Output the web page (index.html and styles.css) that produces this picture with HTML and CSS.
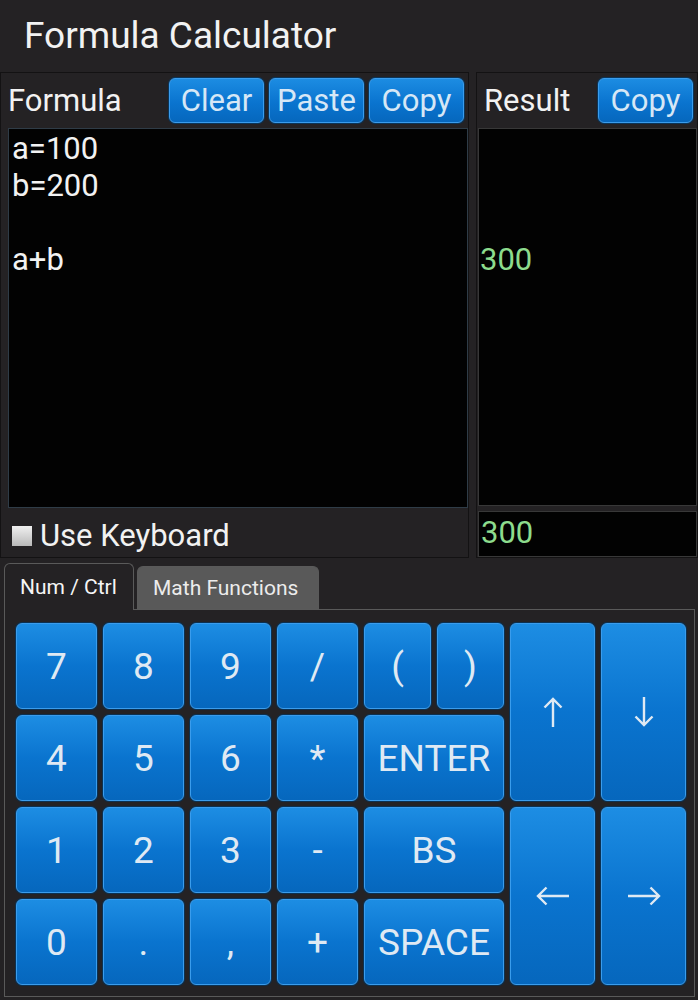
FILE: index.html
```html
<!DOCTYPE html>
<html lang="en">
<head>
  <meta charset="utf-8">
  <title>Formula Calculator</title>
  <link rel="stylesheet" href="styles.css">
</head>
<body>
  <div class="app-title">Formula Calculator</div>

  <div class="work">
    <div class="pane formula-pane">
      <div class="pane-head">
        <span class="pane-label">Formula</span>
        <div class="head-btns">
          <button class="btn">Clear</button>
          <button class="btn">Paste</button>
          <button class="btn">Copy</button>
        </div>
      </div>
      <div class="editor">
        <div class="line">a=100</div>
        <div class="line">b=200</div>
        <div class="line"></div>
        <div class="line">a+b</div>
      </div>
      <label class="kbd-toggle"><span class="check"></span>Use Keyboard</label>
    </div>

    <div class="pane result-pane">
      <div class="pane-head">
        <span class="pane-label">Result</span>
        <div class="head-btns">
          <button class="btn">Copy</button>
        </div>
      </div>
      <div class="results">
        <div class="line"></div>
        <div class="line"></div>
        <div class="line"></div>
        <div class="line">300</div>
      </div>
      <div class="result-total">300</div>
    </div>
  </div>

  <div class="tabs">
    <div class="tab active">Num / Ctrl</div>
    <div class="tab">Math Functions</div>
  </div>

  <div class="tab-panel">
    <div class="keypad">
      <button class="key">7</button>
      <button class="key">8</button>
      <button class="key">9</button>
      <button class="key">/</button>
      <button class="key">(</button>
      <button class="key">)</button>
      <button class="key tall">
        <svg width="32" height="32" viewBox="0 0 32 32"><path d="M16 3V31M7.5 11.5L16 3L24.5 11.5"/></svg>
      </button>
      <button class="key tall">
        <svg width="32" height="32" viewBox="0 0 32 32"><path d="M16 1V29M7.5 20.5L16 29L24.5 20.5"/></svg>
      </button>

      <button class="key">4</button>
      <button class="key">5</button>
      <button class="key">6</button>
      <button class="key">*</button>
      <button class="key wide">ENTER</button>

      <button class="key">1</button>
      <button class="key">2</button>
      <button class="key">3</button>
      <button class="key">-</button>
      <button class="key wide">BS</button>
      <button class="key tall">
        <svg width="34" height="32" viewBox="0 0 34 32"><path d="M2 16H33M10.5 7.5L2 16L10.5 24.5"/></svg>
      </button>
      <button class="key tall">
        <svg width="34" height="32" viewBox="0 0 34 32"><path d="M1 16H32M23.5 7.5L32 16L23.5 24.5"/></svg>
      </button>

      <button class="key">0</button>
      <button class="key">.</button>
      <button class="key">,</button>
      <button class="key">+</button>
      <button class="key wide">SPACE</button>
    </div>
  </div>
</body>
</html>
```

FILE: styles.css
```css
body {
  margin: 0;
  background-color: #242224;
  color: #f2f2f2;
  font-family: Roboto, "Noto Sans", sans-serif;
}

button {
  font-family: inherit;
  padding: 0;
  cursor: pointer;
}

.app-title {
  height: 72px;
  padding-left: 24px;
  font-size: 37px;
  line-height: 72px;
}

/* formula / result panes */

.work {
  display: flex;
  gap: 7px;
  height: 486px;
}

.pane {
  box-sizing: border-box;
  display: flex;
  flex-direction: column;
  border: 1px solid #131213;
}

.formula-pane { width: 469px; }

.result-pane { width: 222px; }

.pane-head {
  display: flex;
  justify-content: space-between;
  height: 55px;
  padding: 5px 4px 0 7px;
  box-sizing: border-box;
}

.pane-label {
  font-size: 31px;
  line-height: 45px;
}

.head-btns {
  display: flex;
  gap: 5px;
}

.btn {
  width: 95px;
  height: 45px;
  border: 1px solid #3a9cec;
  border-radius: 6px;
  box-shadow: 0 0 0 1px #0c3558;
  background: linear-gradient(#1c8ce2, #0a74cf 55%, #0667bd);
  color: #d6e7f6;
  font-size: 31px;
  line-height: 42px;
}

.editor,
.results {
  box-sizing: border-box;
  height: 380px;
  padding: 1px 3px;
  background-color: #020202;
  font-size: 31px;
  line-height: 37px;
}

.editor {
  margin-left: 7px;
  border: 1px solid #2f3c47;
}

.line { height: 37px; }

.kbd-toggle {
  display: flex;
  align-items: center;
  gap: 8px;
  flex: 1;
  padding: 6px 0 0 11px;
  font-size: 31px;
}

.check {
  width: 20px;
  height: 20px;
  background: linear-gradient(#f0f0f0, #b9b9b9);
}

.results {
  height: 378px;
  margin-left: 1px;
  padding-left: 1px;
  border: 1px solid #383838;
  color: #8ddc8d;
}

.result-total {
  box-sizing: border-box;
  height: 46px;
  margin: 5px 0 0 1px;
  padding-left: 2px;
  border: 1px solid #383838;
  background-color: #020202;
  color: #8ddc8d;
  font-size: 31px;
  line-height: 42px;
}

/* tab strip */

.tabs {
  display: flex;
  align-items: flex-end;
  gap: 3px;
  margin: 5px 0 0 4px;
  height: 46px;
}

.tab {
  box-sizing: border-box;
  width: 182px;
  height: 43px;
  padding-left: 15px;
  border: 1px solid #5a5a5a;
  border-bottom: none;
  border-radius: 6px 6px 0 0;
  background-color: #595959;
  color: #ececec;
  font-size: 21px;
  line-height: 42px;
}

.tab.active {
  position: relative;
  z-index: 1;
  height: 47px;
  margin-bottom: -1px;
  width: 130px;
  background-color: #242224;
  color: #f5f5f5;
  line-height: 46px;
}

.tab-panel {
  box-sizing: border-box;
  height: 388px;
  margin: 0 3px 0 4px;
  border: 1px solid #5a5a5a;
  padding: 13px 0 0 11px;
}

/* keypad */

.keypad {
  display: grid;
  grid-template-columns: 81px 81px 81px 81px 67px 67px 85px 85px;
  grid-auto-rows: 86px;
  gap: 6px;
}

.key {
  border: 1px solid #3a9cec;
  border-radius: 6px;
  box-shadow: 0 0 0 1px #0b3152;
  background: linear-gradient(#1d8de3, #0a74cf 50%, #0667bd);
  color: #dfe9f3;
  font-size: 37px;
}

.key.wide { grid-column: span 2; }

.key.tall {
  grid-row: span 2;
  display: flex;
  align-items: center;
  justify-content: center;
}

.key svg {
  fill: none;
  stroke: #dfe9f3;
  stroke-width: 2.4;
}
```
